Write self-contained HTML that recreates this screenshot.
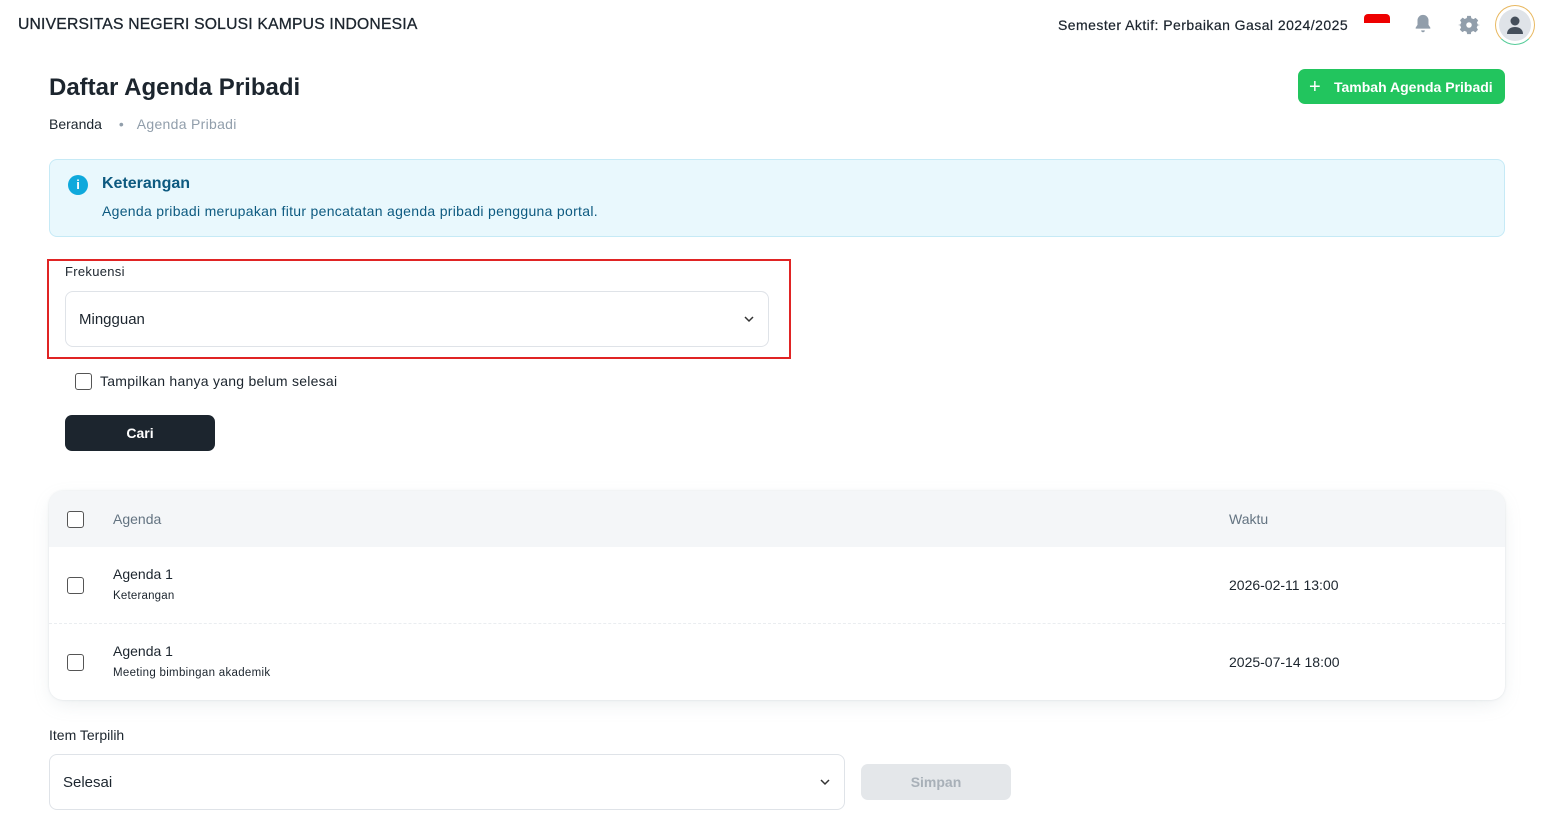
<!DOCTYPE html>
<html><head><meta charset="utf-8"><style>
*{box-sizing:border-box;margin:0;padding:0}
body{width:1564px;height:814px;overflow:hidden;background:#fff;font-family:"Liberation Sans",sans-serif;color:#1c252e;position:relative}
.a{position:absolute}
.cb{position:absolute;width:17px;height:17px;border:1.6px solid #555;border-radius:3px;background:#fff}
</style></head><body>
<div class="a" style="left:18px;top:16px;font-size:15.7px;color:#1c252e;letter-spacing:0.2px;-webkit-text-stroke:0.3px #1c252e">UNIVERSITAS NEGERI SOLUSI KAMPUS INDONESIA</div>
<div class="a" style="left:1058px;top:17px;font-size:14px;letter-spacing:0.45px;-webkit-text-stroke:0.2px #1c252e">Semester Aktif: Perbaikan Gasal 2024/2025</div>
<div class="a" style="left:1364px;top:14px;width:26px;height:9px;background:#e00;border-radius:4px 4px 0 0"></div>
<svg class="a" style="left:1412px;top:13px" width="22" height="22" viewBox="0 0 24 24"><path fill="#919eab" d="M12 2a6 6 0 0 0-6 6v5l-2 3v1h16v-1l-2-3V8a6 6 0 0 0-6-6zm-2 17a2 2 0 0 0 4 0z"/></svg>
<svg class="a" style="left:1458px;top:14px" width="22" height="22" viewBox="0 0 24 24"><path fill="#919eab" d="M10 2h4l.6 2.6 2.3 1 2.3-1.4 2.8 2.8-1.4 2.3 1 2.3L24 12v0l-2.6.6-1 2.3 1.4 2.3-2.8 2.8-2.3-1.4-2.3 1L14 22h-4l-.6-2.6-2.3-1-2.3 1.4-2.8-2.8 1.4-2.3-1-2.3L0 12l2.6-.6 1-2.3L2.2 6.8 5 4l2.3 1.4 2.3-1z"/><circle cx="12" cy="12" r="3" fill="#fff"/></svg>
<div class="a" style="left:1495px;top:5px;width:40px;height:40px;border-radius:50%;border:1.5px solid #e8b860;border-bottom-color:#5c9;padding:3px"><div style="width:100%;height:100%;border-radius:50%;background:#dfe3e8;position:relative"><svg style="position:absolute;left:7px;top:6px" width="18" height="20" viewBox="0 0 18 20"><circle cx="9" cy="6" r="4.5" fill="#454f5b"/><path d="M1 19c0-5 4-7 8-7s8 2 8 7z" fill="#454f5b"/></svg></div></div>

<div class="a" style="left:49px;top:74px;font-size:24px;font-weight:bold">Daftar Agenda Pribadi</div>
<div class="a" style="left:49px;top:116px;font-size:14px">Beranda <span style="color:#919eab;margin:0 13px">•</span><span style="color:#919eab;letter-spacing:0.3px">Agenda Pribadi</span></div>
<div class="a" style="left:1298px;top:69px;width:207px;height:35px;background:#22c55e;border-radius:7px;color:#fff;font-weight:bold;font-size:14px;line-height:36px;padding-left:36px">Tambah Agenda Pribadi</div>
<div class="a" style="left:1309px;top:78px;color:#fff;font-size:20px;line-height:18px">+</div>

<div class="a" style="left:49px;top:159px;width:1456px;height:78px;background:#e9f8fd;border:1px solid #c6eaf6;border-radius:8px"></div>
<div class="a" style="left:68px;top:175px;width:20px;height:20px;border-radius:50%;background:#0fa9dc;color:#fff;font-weight:bold;font-size:13px;text-align:center;line-height:20px">i</div>
<div class="a" style="left:102px;top:175px;font-size:16px;color:#0d5a80;font-weight:bold">Keterangan</div>
<div class="a" style="left:102px;top:203px;font-size:14px;color:#0d5a80;letter-spacing:0.3px">Agenda pribadi merupakan fitur pencatatan agenda pribadi pengguna portal.</div>

<div class="a" style="left:47px;top:259px;width:744px;height:100px;border:2px solid #e02424"></div>
<div class="a" style="left:65px;top:264px;font-size:13px;letter-spacing:0.3px">Frekuensi</div>
<div class="a" style="left:65px;top:291px;width:704px;height:56px;border:1px solid #dfe3e8;border-radius:8px;font-size:15px;line-height:56px;padding-left:13px">Mingguan</div>
<svg class="a" style="left:743px;top:314px" width="12" height="10"><path d="M2 3l4 4 4-4" stroke="#333" stroke-width="1.5" fill="none"/></svg>
<div class="cb" style="left:75px;top:373px"></div>
<div class="a" style="left:100px;top:373px;font-size:14px;letter-spacing:0.25px">Tampilkan hanya yang belum selesai</div>
<div class="a" style="left:65px;top:415px;width:150px;height:36px;background:#1c252e;border-radius:7px;color:#fff;font-weight:bold;font-size:14px;text-align:center;line-height:36px">Cari</div>

<div class="a" style="left:49px;top:491px;width:1456px;height:209px;border-radius:14px;box-shadow:0 0 2px rgba(145,158,171,.25),0 6px 20px -4px rgba(145,158,171,.2);overflow:hidden">
<div style="height:56px;background:#f4f6f8"></div>
<div style="position:absolute;left:0;right:0;top:132px;border-top:1px dashed #eaedf0"></div>
</div>
<div class="cb" style="left:67px;top:511px"></div>
<div class="a" style="left:113px;top:511px;font-size:14px;color:#637381">Agenda</div>
<div class="a" style="left:1229px;top:511px;font-size:14px;color:#637381">Waktu</div>
<div class="cb" style="left:67px;top:577px"></div>
<div class="a" style="left:113px;top:566px;font-size:14px">Agenda 1</div>
<div class="a" style="left:113px;top:590px;font-size:11.5px;letter-spacing:0.2px">Keterangan</div>
<div class="a" style="left:1229px;top:577px;font-size:14px">2026-02-11 13:00</div>
<div class="cb" style="left:67px;top:654px"></div>
<div class="a" style="left:113px;top:643px;font-size:14px">Agenda 1</div>
<div class="a" style="left:113px;top:667px;font-size:11.5px;letter-spacing:0.3px">Meeting bimbingan akademik</div>
<div class="a" style="left:1229px;top:654px;font-size:14px">2025-07-14 18:00</div>

<div class="a" style="left:49px;top:727px;font-size:14px">Item Terpilih</div>
<div class="a" style="left:49px;top:754px;width:796px;height:56px;border:1px solid #dfe3e8;border-radius:8px;font-size:15px;line-height:56px;padding-left:13px">Selesai</div>
<svg class="a" style="left:819px;top:777px" width="12" height="10"><path d="M2 3l4 4 4-4" stroke="#333" stroke-width="1.5" fill="none"/></svg>
<div class="a" style="left:861px;top:764px;width:150px;height:36px;background:#e4e7ea;border-radius:7px;color:#a8b0b8;font-weight:bold;font-size:14px;text-align:center;line-height:36px">Simpan</div>
</body></html>
